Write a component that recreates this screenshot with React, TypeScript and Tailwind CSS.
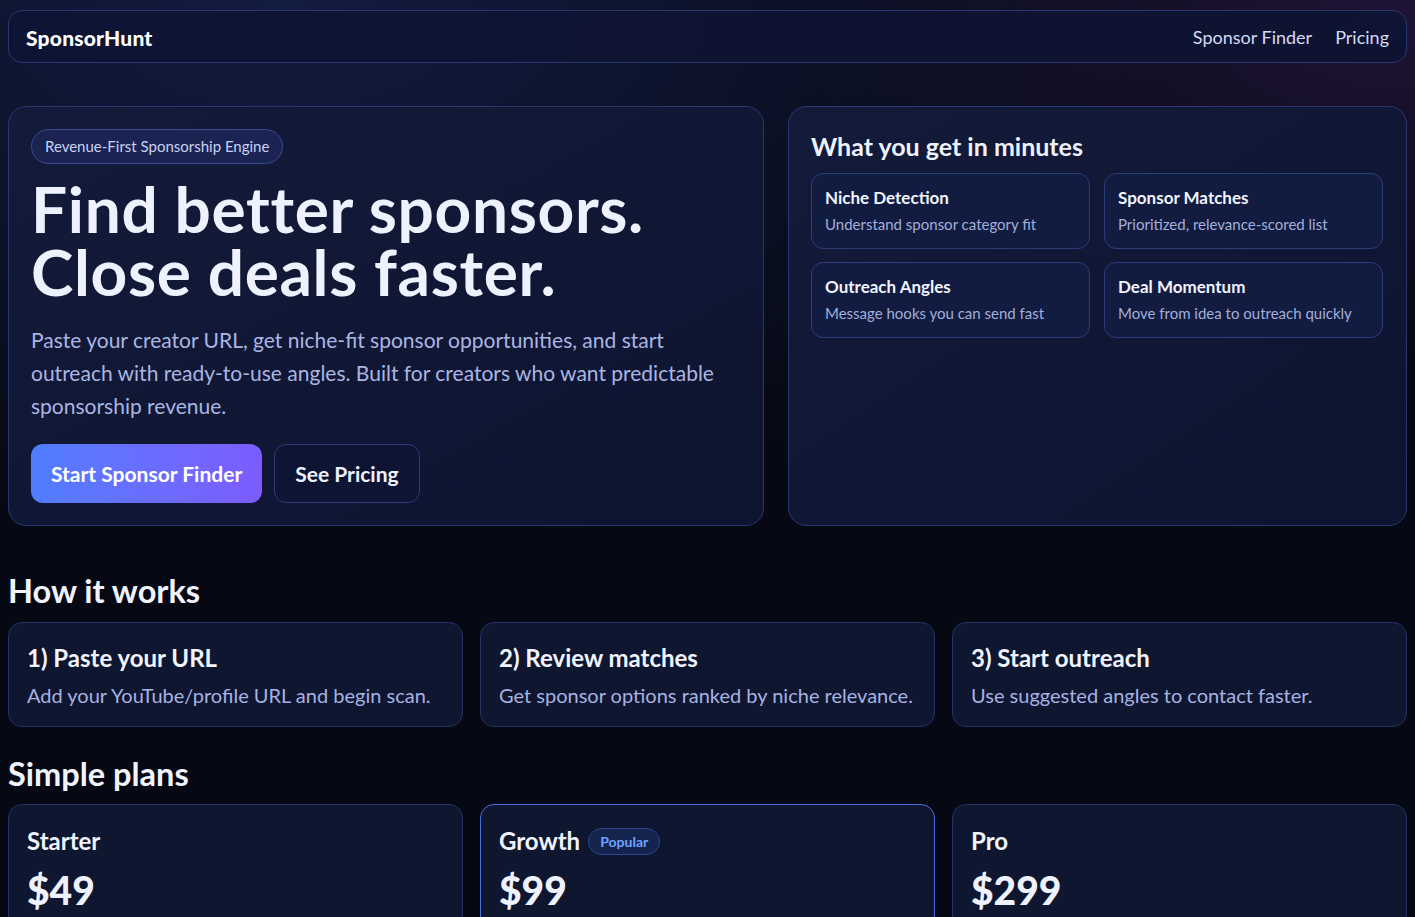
import React from "react";

const features = [
  { title: "Niche Detection", desc: "Understand sponsor category fit" },
  { title: "Sponsor Matches", desc: "Prioritized, relevance-scored list" },
  { title: "Outreach Angles", desc: "Message hooks you can send fast" },
  { title: "Deal Momentum", desc: "Move from idea to outreach quickly" },
];

const steps = [
  { title: "1) Paste your URL", desc: "Add your YouTube/profile URL and begin scan." },
  { title: "2) Review matches", desc: "Get sponsor options ranked by niche relevance." },
  { title: "3) Start outreach", desc: "Use suggested angles to contact faster." },
];

const plans = [
  { name: "Starter", price: "$49" },
  { name: "Growth", price: "$99", popular: true },
  { name: "Pro", price: "$299" },
];

export default function App() {
  return (
    <div
      className="min-h-screen bg-[#060913] px-2 pt-[10px] pb-10 text-[#eef2ff]"
      style={{
        fontFamily: "Lato, 'Noto Sans', sans-serif",
        backgroundImage:
          "radial-gradient(900px 500px at 100% 0%, rgba(80,40,120,0.35), transparent 70%), radial-gradient(1200px 700px at 20% 0%, rgba(20,30,70,0.9), transparent 75%)",
      }}
    >
      {/* nav */}
      <nav className="flex h-[53px] items-center justify-between rounded-[14px] border border-[#28386f] bg-[#0e1433]/90 px-[17px] pt-[2px]">
        <span className="text-[21px] font-black tracking-[0.01em] text-white">SponsorHunt</span>
        <div className="flex items-center gap-[23px] text-[18px] text-[#d3daf6]">
          <a>Sponsor Finder</a>
          <a>Pricing</a>
        </div>
      </nav>

      {/* hero */}
      <section className="mt-[43px] grid grid-cols-[756px_1fr] gap-[24px]">
        <div className="rounded-[18px] border border-[#28386f] bg-gradient-to-br from-[#131b3a] to-[#0d1430] px-[22px] pt-[22px] pb-[22px]">
          <span className="inline-flex h-[35px] items-center rounded-full border border-[#3a4a92] bg-[#1a2352] px-[13px] text-[15px] text-[#c9d2f3]">
            Revenue-First Sponsorship Engine
          </span>
          <h1 className="mt-[13px] text-[64px] leading-[63px] font-bold tracking-[0.01em] text-[#eef2ff]">
            Find better sponsors.
            <br />
            Close deals faster.
          </h1>
          <p className="mt-[20px] max-w-[705px] text-[21px] leading-[33px] text-[#aab5e2]">
            Paste your creator URL, get niche-fit sponsor opportunities, and start outreach with ready-to-use angles. Built for creators who want predictable sponsorship revenue.
          </p>
          <div className="mt-[22px] flex gap-[12px]">
            <button className="h-[59px] rounded-[12px] bg-gradient-to-r from-[#4f7dff] to-[#7c5cff] px-[20px] text-[21px] font-bold text-white">
              Start Sponsor Finder
            </button>
            <button className="h-[59px] rounded-[12px] border border-[#2b3c78] bg-[#0e1534] px-[20px] text-[21px] font-bold text-[#eef2ff]">
              See Pricing
            </button>
          </div>
        </div>

        <div className="rounded-[18px] border border-[#28386f] bg-gradient-to-br from-[#131b3a] to-[#0d1430] px-[22px] pt-[24px] pb-[22px]">
          <h2 className="text-[25px] leading-[30px] font-bold text-[#eef2ff]">What you get in minutes</h2>
          <div className="mt-[12px] grid grid-cols-2 gap-x-[14px] gap-y-[13px] pr-[1px]">
            {features.map((f) => (
              <div
                key={f.title}
                className="h-[76px] rounded-[12px] border border-[#2b3d7c] bg-[#121c40] px-[13px] pt-[13px]"
              >
                <div className="text-[17px] leading-[22px] font-bold text-[#f1f4ff]">{f.title}</div>
                <div className="mt-[5px] text-[15px] leading-[20px] text-[#a3aedb]">{f.desc}</div>
              </div>
            ))}
          </div>
        </div>
      </section>

      {/* how it works */}
      <h2 className="mt-[47px] text-[32.5px] leading-[36px] font-bold text-[#f1f4ff]">How it works</h2>
      <div className="mt-[13px] grid grid-cols-3 gap-[17px]">
        {steps.map((s) => (
          <div key={s.title} className="h-[105px] rounded-[14px] border border-[#243266] bg-[#0f1630] px-[18px] pt-[20px]">
            <div className="text-[24px] leading-[30px] font-bold text-[#f1f4ff]">{s.title}</div>
            <div className="mt-[8px] text-[20px] leading-[28px] whitespace-nowrap text-[#a6b2e2]">{s.desc}</div>
          </div>
        ))}
      </div>

      {/* plans */}
      <h2 className="mt-[29px] text-[32.5px] leading-[36px] font-bold text-[#f1f4ff]">Simple plans</h2>
      <div className="mt-[12px] grid grid-cols-3 gap-[17px]">
        {plans.map((p) => (
          <div
            key={p.name}
            className={
              p.popular
                ? "h-[200px] rounded-[14px] border border-[#4a6fe0] bg-[#0f1630] px-[18px] pt-[21px]"
                : "h-[200px] rounded-[14px] border border-[#243266] bg-[#0f1630] px-[18px] pt-[21px]"
            }
          >
            <div className="flex items-center gap-[8px]">
              <span className="text-[24px] leading-[30px] font-bold text-[#f1f4ff]">{p.name}</span>
              {p.popular && (
                <span className="rounded-full border border-[#2d4590] bg-[#15234f] px-[11px] py-[2px] text-[14px] font-bold text-[#6fa3ff]">
                  Popular
                </span>
              )}
            </div>
            <div className="mt-[12px] text-[39px] leading-[44px] font-black text-[#eef2ff]">{p.price}</div>
          </div>
        ))}
      </div>
    </div>
  );
}
